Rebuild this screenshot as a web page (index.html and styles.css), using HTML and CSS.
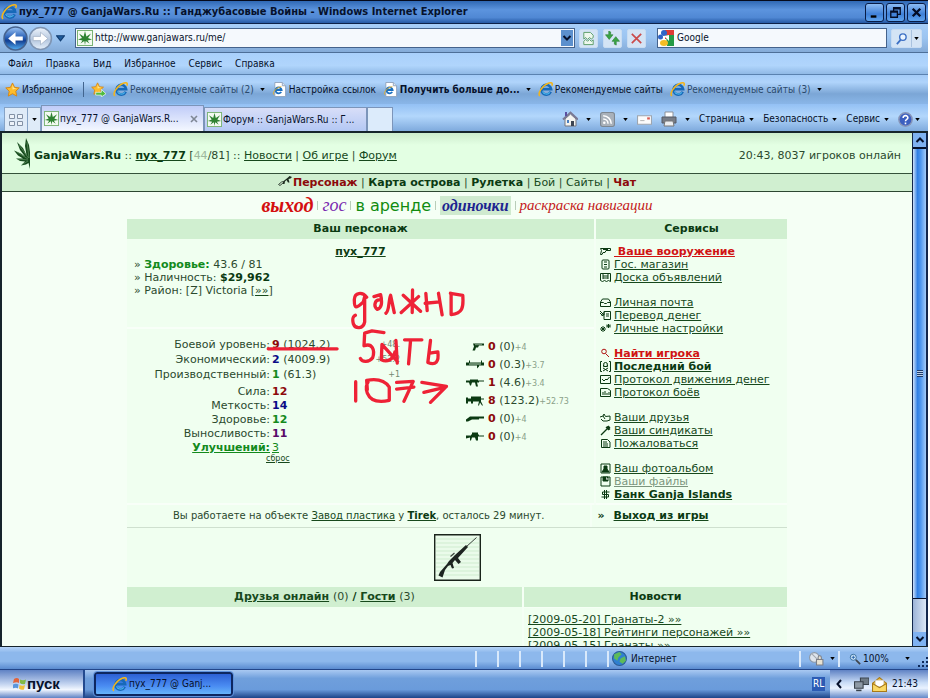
FILE: index.html
```html
<!DOCTYPE html>
<html lang="ru">
<head>
<meta charset="utf-8">
<title>пух_777 @ GanjaWars.Ru :: Ганджубасовые Войны</title>
<link rel="stylesheet" href="styles.css">
</head>
<body>
<svg class="defs" aria-hidden="true">
  <defs>
    <linearGradient id="blueBall" x1="0" y1="0" x2="0" y2="1"><stop offset="0" stop-color="#9cc4f4"/><stop offset=".45" stop-color="#2b62b8"/><stop offset=".6" stop-color="#123f92"/><stop offset="1" stop-color="#55b0f4"/></linearGradient>
    <linearGradient id="greyBall" x1="0" y1="0" x2="0" y2="1"><stop offset="0" stop-color="#eef4fc"/><stop offset=".55" stop-color="#b4c6de"/><stop offset="1" stop-color="#e6f0fb"/></linearGradient>
    <symbol id="ie" viewBox="0 0 16 16">
      <path d="M13.6 10.4A5.2 5.2 0 1 1 14 7.6H5.2" fill="none" stroke="#1769b8" stroke-width="2.8"/>
      <path d="M12.6 11A4.6 4.6 0 0 1 4.6 10" fill="none" stroke="#49b4ea" stroke-width="1.2"/>
      <path d="M2 15C-1 12 5 3.400 11 1.300C15-.2 16 1.600 14.600 4" fill="none" stroke="#f2b51d" stroke-width="1.600"/>
    </symbol>
    <symbol id="iepage" viewBox="0 0 16 16"><path d="M3 .5h8l3.500 3.500v11.500H3z" fill="#fff" stroke="#8fa3bd"/><path d="M11 .5V4h3.500" fill="#dde7f3" stroke="#8fa3bd"/><path d="M9.800 10.500A3.200 3.200 0 1 1 10.200 8.500H4.200" fill="none" stroke="#1a6fc0" stroke-width="2"/><path d="M2 13.500C0 11 5 5.500 10 5" fill="none" stroke="#e9ae22"/></symbol>
    <symbol id="leaf" viewBox="0 0 16 16"><rect x=".5" y=".5" width="15" height="15" fill="#f3faf1" stroke="#7ab374"/><path d="M8 15L7.300 11L3.500 13.500L5.500 10.500L1 9.500L5 8L2 3.500L6.600 6.500L8 1L9.400 6.500L14 3.500L11 8L15 9.500L10.500 10.500L12.500 13.500L8.700 11z" fill="#2f8232"/></symbol>
    <symbol id="star" viewBox="0 0 16 16"><path d="M8 1L10.200 5.700L15.200 6.300L11.500 9.800L12.500 15L8 12.500L3.500 15L4.500 9.800L.8 6.300L5.800 5.700z" fill="#fdbc2c" stroke="#d78512"/><path d="M8 3L9.500 6.500L12.500 7L8 8z" fill="#ffe694"/></symbol>
    <symbol id="arrow" viewBox="0 0 6 4"><path d="M0 0h6L3 4z"/></symbol>
  </defs>
</svg>

<header class="titlebar">
  <svg class="i16"><use href="#ie"/></svg>
  <h1>пух_777 @ GanjaWars.Ru :: Ганджубасовые Войны - Windows Internet Explorer</h1>
  <button class="win" aria-label="Свернуть"><svg viewBox="0 0 18 18"><path d="M5 12h6v2.500H5z"/></svg></button>
  <button class="win" aria-label="Восстановить"><svg viewBox="0 0 18 18"><path d="M7 7V4h7v7h-3M7 5h7M4 7.500h7V14H4zM4 8.500h7" fill="none" stroke="#040d26" stroke-width="1.400"/></svg></button>
  <button class="win" aria-label="Закрыть"><svg viewBox="0 0 18 18"><path d="M5 5l8 8M13 5l-8 8" stroke="#040d26" stroke-width="2.500"/></svg></button>
</header>

<div class="navbar">
  <button class="plain" aria-label="Назад"><svg class="ball" viewBox="0 0 24 24"><circle cx="12" cy="12" r="11" fill="url(#blueBall)" stroke="#47648f" stroke-width="1.500"/><path d="M5 12l7-6v4h7v4h-7v4z" fill="#fff"/></svg></button>
  <button class="plain" aria-label="Вперед"><svg class="ball" viewBox="0 0 24 24"><circle cx="12" cy="12" r="10.500" fill="url(#greyBall)" stroke="#7f95b3" stroke-width="1.500"/><path d="M19 12l-7-6v4H5v4h7v4z" fill="#fff" stroke="#a2b1c5" stroke-width=".7"/></svg></button>
  <button class="plain history" aria-label="Журнал"><svg viewBox="0 0 8 6"><path d="M.5.500h7L4 5z" fill="#1f5c9c" stroke="#123e74"/></svg></button>
  <div class="address">
    <svg class="i16"><use href="#leaf"/></svg>
    <input type="text" aria-label="Адрес" value="http://www.ganjawars.ru/me/">
    <button class="drop" aria-label="Показать адреса"><svg viewBox="0 0 12 16"><path d="M2.500 6L6 9.500L9.500 6" fill="none" stroke="#06112b" stroke-width="2"/></svg></button>
  </div>
  <button class="tool" aria-label="Режим совместимости"><svg viewBox="0 0 16 16"><path d="M3 1.500h7l3 3V7l-2 1.500L9 7 7 9 5 7 3 8.500z" fill="#eef8ee" stroke="#5a9c66"/><path d="M3 14.500V11l2-2 2 2 2-2 2 2 2-1.500v5z" fill="#eef8ee" stroke="#5a9c66"/></svg></button>
  <button class="tool" aria-label="Обновить"><svg viewBox="0 0 16 16"><path d="M4 0v4H.5L4.500 9 8.500 4H6V1zM12 15v-4h3.500L11.500 6 7.500 11H10v3z" fill="#3aa544" stroke="#237a2c" stroke-width=".6"/></svg></button>
  <button class="tool" aria-label="Остановить"><svg viewBox="0 0 16 16"><path d="M3 3l10 10M13 3L3 13" stroke="#cb4b4b" stroke-width="1.800"/></svg></button>
  <div class="search">
    <svg class="i16" viewBox="0 0 16 16"><path d="M0 0h16v16H0z" fill="#fff"/><path d="M7 0h9v9H7z" fill="#df3a34"/><path d="M8 5h8v11H9z" fill="#249a45"/><circle cx="6" cy="3" r="3" fill="#2f65c8"/><circle cx="2.500" cy="7" r="2.500" fill="#2f65c8"/><path d="M6 6l5-1v6z" fill="#fff"/><ellipse cx="6" cy="13" rx="4" ry="3" fill="#f4bd25"/></svg>
    <input type="text" aria-label="Поиск" value="Google">
  </div>
  <div class="go">
    <button aria-label="Найти"><svg viewBox="0 0 14 14"><circle cx="8.500" cy="5.500" r="3.500" fill="#eaf4ff" stroke="#3b6fc4" stroke-width="1.500"/><path d="M6 8.500L2 13" stroke="#3b6fc4" stroke-width="2"/></svg></button>
    <button class="more" aria-label="Параметры поиска"><svg class="tri"><use href="#arrow"/></svg></button>
  </div>
</div>

<nav class="menubar" aria-label="Меню">
  <button>Файл</button><button>Правка</button><button>Вид</button><button>Избранное</button><button>Сервис</button><button>Справка</button>
</nav>

<div class="favbar">
  <button class="first"><svg class="i14"><use href="#star"/></svg>Избранное</button>
  <button class="add" aria-label="Добавить"><svg class="i14" viewBox="0 0 16 16"><use href="#star" width="14" height="14"/><path d="M5 11h6V8l5 4.500-5 3.500v-2H5z" fill="#4fbb3e" stroke="#fff" stroke-width=".7"/></svg></button>
  <button class="dim"><svg class="i14"><use href="#ie"/></svg>Рекомендуемые сайты (2)<svg class="tri"><use href="#arrow"/></svg></button>
  <button><svg class="i14"><use href="#iepage"/></svg>Настройка ссылок</button>
  <button class="strong"><svg class="i14"><use href="#iepage"/></svg>Получить больше до...<svg class="tri"><use href="#arrow"/></svg></button>
  <button><svg class="i14"><use href="#ie"/></svg>Рекомендуемые сайты</button>
  <button class="dim"><svg class="i14"><use href="#ie"/></svg>Рекомендуемые сайты (3)<svg class="tri"><use href="#arrow"/></svg></button>
</div>

<div class="tabbar">
  <button class="quick" aria-label="Быстрые вкладки"><svg viewBox="0 0 14 12"><path d="M.5.500h5v4h-5zM8.500.500h5v4h-5zM.5 7.500h5v4h-5zM8.500 7.500h5v4h-5z" fill="#eef3fa" stroke="#8291a5"/></svg></button>
  <button class="quick small" aria-label="Список вкладок"><svg class="tri"><use href="#arrow"/></svg></button>
  <button class="tab active"><svg class="i14"><use href="#leaf"/></svg><span>пух_777 @ GanjaWars.R...</span><svg class="x" viewBox="0 0 8 8"><path d="M1 1l6 6M7 1L1 7" stroke="#7f8794" stroke-width="1.600"/></svg></button>
  <button class="tab"><svg class="i14"><use href="#leaf"/></svg><span>Форум :: GanjaWars.Ru :: Г...</span></button>
  <button class="tab new" aria-label="Новая вкладка"></button>
  <div class="commands">
    <button aria-label="Домой"><svg class="i16" viewBox="0 0 16 16"><path d="M3 8v7h11V8L8.500 3z" fill="#f4f4f0" stroke="#76767e"/><path d="M1 8.500L8.500 1.500L16 8.500" fill="none" stroke="#7a7994" stroke-width="2"/><path d="M3 1h2v4H3z" fill="#5b4fa0"/><path d="M9 10h3v5H9z" fill="#3d4552"/><path d="M5 9h2v3H5z" fill="#4a7fc0"/></svg><svg class="tri"><use href="#arrow"/></svg></button>
    <button aria-label="Каналы"><svg class="i14" viewBox="0 0 14 14"><rect x=".5" y=".5" width="13" height="13" rx="2" fill="#a9b1ba" stroke="#7d8791"/><path d="M3 6.500a4.500 4.500 0 0 1 4.500 4.500M3 3.500a7.500 7.500 0 0 1 7.500 7.500" fill="none" stroke="#fff" stroke-width="1.400"/><circle cx="4" cy="10" r="1.200" fill="#fff"/></svg><svg class="tri"><use href="#arrow"/></svg></button>
    <button aria-label="Почта"><svg class="i14" viewBox="0 0 14 14"><path d="M.5 3.500h13v8H.5z" fill="#fbfbfb" stroke="#9da5af"/><path d="M9.500 5h2.500v2H9.500z" fill="#d85a52"/><path d="M3 8h4" stroke="#bbb"/></svg></button>
    <button aria-label="Печать"><svg class="i16" viewBox="0 0 16 16"><path d="M4 1h8v6H4z" fill="#fff" stroke="#8c9199"/><path d="M1 6h14v6H1z" fill="#777d87" stroke="#555b66"/><path d="M4 10h8l1 5H3z" fill="#eceff2" stroke="#777"/></svg><svg class="tri"><use href="#arrow"/></svg></button>
    <button>Страница<svg class="tri"><use href="#arrow"/></svg></button>
    <button>Безопасность<svg class="tri"><use href="#arrow"/></svg></button>
    <button>Сервис<svg class="tri"><use href="#arrow"/></svg></button>
    <button class="help" aria-label="Справка"><svg class="i14" viewBox="0 0 14 14"><circle cx="7" cy="7" r="6.200" fill="#3c5fc0" stroke="#8694b8" stroke-width="1.400"/><path d="M4.800 5.500c0-3 4.600-2.600 4.400 0C9.100 7 7 6.800 7 8.600M7 9.800v1.600" fill="none" stroke="#fff" stroke-width="1.500"/></svg><svg class="tri"><use href="#arrow"/></svg></button>
  </div>
</div>

<div class="viewport">
  <main class="page">
    <div class="site-head">
      <svg class="logo" viewBox="0 0 17 31"><path d="M16 31L14.500 25L12 26.500L7 27.500L11 23.500L6 23L2 20.500L9 20.500L4 17.500L0 12.500L7 15.500L11 18.500L6 12L3 4L9 10L12.500 17L11 8L12 0L15 7L16 14z" fill="#174b1d"/><path d="M14 23L8 26.500M14 22L4 21M14 21L3 14M14.500 20L5 7M15 20L13 4" stroke="#7fb07f" stroke-width=".5"/></svg>
      <p><b>GanjaWars.Ru</b> :: <a href="#"><b>пух_777</b></a> [<span class="faint">44</span>/81] :: <a href="#">Новости</a> | <a href="#">Об игре</a> | <a href="#">Форум</a></p>
      <p class="online">20:43, 8037 игроков онлайн</p>
    </div>
    <nav class="site-nav">
      <svg viewBox="0 0 14 10"><path d="M4.500 5.500L9.500 1.500L11 0L13.500 1L12 2.500L10 3L11 6.500L9.500 6.500L8 4L6.500 5.500L6 8L4.500 8z" fill="#1c2b1e"/><path d="M0 8.500L3 6L5 5.500M0 8.500L1.500 9.500L4.500 7" fill="none" stroke="#3b4a3d"/></svg><a href="#" class="red"><b>Персонаж</b></a> | <a href="#"><b>Карта острова</b></a> | <a href="#"><b>Рулетка</b></a> | <a href="#">Бой</a> | <a href="#">Сайты</a> | <a href="#" class="red"><b>Чат</b></a>
    </nav>
    <nav class="quicklinks">
      <a href="#" class="q-exit">выход</a><i></i><a href="#" class="q-gos">гос</a><i></i><a href="#" class="q-rent">в аренде</a><i></i><a href="#" class="q-single">одиночки</a><i></i><a href="#" class="q-paint">раскраска навигации</a>
    </nav>

    <div class="board">
      <div class="row upper">
        <section class="character">
          <h2>Ваш персонаж</h2>
          <div class="cell summary">
            <a href="#" class="nick"><b>пух_777</b></a>
            <p>» <b class="green">Здоровье:</b> 43.6 / 81</p>
            <p>» Наличность: <b class="dark">$29,962</b></p>
            <p>» Район: [Z] Victoria [<a href="#">»»</a>]</p>
          </div>
          <div class="cell stats">
            <table class="levels">
              <tbody>
                <tr><th>Боевой уровень:</th><td><b class="red">9</b> (1024.2)</td><td class="plus">+48.</td></tr>
                <tr><th>Экономический:</th><td><b class="navy">2</b> (4009.9)</td><td class="plus">+52.2</td></tr>
                <tr><th>Производственный:</th><td><b class="green">1</b> (61.3)</td><td class="plus">+1</td></tr>
              </tbody>
              <tbody class="skills">
                <tr><th>Сила:</th><td><b class="red">12</b></td></tr>
                <tr><th>Меткость:</th><td><b class="navy">14</b></td></tr>
                <tr><th>Здоровье:</th><td><b class="green">12</b></td></tr>
                <tr><th>Выносливость:</th><td><b class="purple">11</b></td></tr>
                <tr class="upg"><th><a href="#">Улучшений:</a></th><td><a href="#">3</a></td></tr>
                <tr class="reset"><th></th><td><a href="#">сброс</a></td></tr>
              </tbody>
            </table>
            <table class="weapons">
              <tr><th><svg viewBox="0 0 18 9"><path d="M7 1h11v2h-5l-1 2h-2L9 8H6.500L8 4z"/><path d="M9 2.200h7" stroke="#effff0" stroke-width=".5"/></svg></th><td><b class="red">0</b> (0)<small>+4</small></td></tr>
              <tr><th><svg viewBox="0 0 18 9"><path d="M0 2h18v3h-5v1l-2 2v-3H0zM3 0h1v2H3zM15 0h1v2h-1z"/><path d="M3 3.500h12" stroke="#effff0" stroke-width=".8"/></svg></th><td><b class="red">0</b> (0.3)<small>+3.7</small></td></tr>
              <tr><th><svg viewBox="0 0 18 9"><path d="M0 2h4V1h8v1h6v1h-5v1h-2l1 4h-2L9 4H6L5 7H4L3 4H0z"/></svg></th><td><b class="red">1</b> (4.6)<small>+3.4</small></td></tr>
              <tr><th><svg viewBox="0 0 18 9"><path d="M0 1h2v1h3V0h10v2h3v1h-3v2l2 4h-1l-2-3-1 3h-1l1-4H7v2H5V5H2v2H0z"/></svg></th><td><b class="red">8</b> (123.2)<small>+52.73</small></td></tr>
              <tr><th><svg viewBox="0 0 18 9"><path d="M0 5l4-3h14v2h-5v1H6L2 7H0z"/></svg></th><td><b class="red">0</b> (0)<small>+4</small></td></tr>
              <tr><th><svg viewBox="0 0 18 9"><path d="M0 3h5V2h1V0h6v2h1v1h5v1h-6v4h-2L9 5H6L5 8H4V5L0 6z"/></svg></th><td><b class="red">0</b> (0)<small>+4</small></td></tr>
            </table>
          </div>
        </section>
        <section class="services">
          <h2>Сервисы</h2>
          <div class="cell menu">
            <ul>
              <li class="hot"><svg viewBox="0 0 11 11"><path d="M.5 2.500h10v2H6L5 6.500H3L2 8.500H.5l1-4zM3 3.500h5"/></svg><a href="#">&nbsp;Ваше вооружение</a></li>
              <li><svg viewBox="0 0 11 11"><rect x="2" y="1" width="7" height="9" rx="1"/><path d="M4 3h3M4 5.500h3M4 8h3"/></svg><a href="#">Гос. магазин</a></li>
              <li><svg viewBox="0 0 11 11"><path d="M.5 1.500h10v8l-2-1-2 1-2-1-2 1-2-1zM3 4h5M3 6h5M3 2v5M8 2v5"/></svg><a href="#">Доска объявлений</a></li>
            </ul>
            <ul>
              <li><svg viewBox="0 0 11 11"><path d="M.5 5L2.500 2h6l2 3v4.500H.5zM.5 5.500h3l1 1h2l1-1h3"/></svg><a href="#">Личная почта</a></li>
              <li><svg viewBox="0 0 11 11"><path d="M4 1.500h6.500v8H4zM6 4h3M6 6h3M0 1l4 4M4 2v3H1M0 3l3 3"/></svg><a href="#">Перевод денег</a></li>
              <li><svg viewBox="0 0 11 11"><path d="M0 6h6M3 3v6M1 4l4 4M5 4L1 8M6 3h5M8.500 1v4M7 1.500l3 3M10 1.500l-3 3"/></svg><a href="#">Личные настройки</a></li>
            </ul>
            <ul>
              <li class="hot"><svg viewBox="0 0 11 11"><circle cx="4" cy="3.500" r="2.300"/><path d="M5.500 5.500L9 9"/></svg><a href="#">Найти игрока</a></li>
              <li><svg viewBox="0 0 11 11"><path d="M2 .5H.5v10H2M9 .5h1.500v10H9M3.500 3.500a2 2 0 0 1 4 0v2h-4zM3 7l5 3M8 7l-5 3M4.500 4h.5M6.500 4h.5"/></svg><a href="#"><b>Последний бой</b></a></li>
              <li><svg viewBox="0 0 11 11"><path d="M.5 1.500h10v8H.5zM2 5l2 2 2-2 1 1 2.500-3"/></svg><a href="#">Протокол движения денег</a></li>
              <li><svg viewBox="0 0 11 11"><path d="M.5 1.500h7l3 2v6H.5zM3 8V5M5 8V4M7 8V6M9 8V5"/></svg><a href="#">Протокол боёв</a></li>
            </ul>
            <ul>
              <li><svg viewBox="0 0 11 11"><path d="M0 5l3-1 1-2 1.500 2.500L10 4v4L7 9H3L1 7M3 4l2 3"/></svg><a href="#">Ваши друзья</a></li>
              <li><svg viewBox="0 0 11 11"><path d="M1 10l8-8M6 2l3 3M7 1.500l3 3M8 1l2 2" stroke-width="1.300"/></svg><a href="#">Ваши синдикаты</a></li>
              <li><svg viewBox="0 0 11 11"><path d="M1.500 1.500h6l2.500 2.500v5.500H1.500zM3 4h4M3 6h5M3 8h5"/></svg><a href="#">Пожаловаться</a></li>
            </ul>
            <ul>
              <li><svg viewBox="0 0 11 11"><path d="M1 1h9v9H1z"/><path d="M4 3h3v3l2 3H2l2-3z" fill="#0b3a12"/></svg><a href="#">Ваш фотоальбом</a></li>
              <li class="off"><svg viewBox="0 0 11 11"><path d="M1 1h9v9H1z"/><path d="M3 1h5v4H3z" fill="#0b3a12"/><path d="M6 2h1v2" stroke="#fff"/></svg><a href="#">Ваши файлы</a></li>
              <li><svg viewBox="0 0 11 11"><path d="M9.500 3H2.500v2.500h6V8H1.500M4.500 1v9M6.500 1v9"/></svg><a href="#"><b>Банк Ganja Islands</b></a></li>
            </ul>
          </div>
        </section>
      </div>
      <div class="row work">
        <p class="cell job">Вы работаете на объекте <a href="#">Завод пластика</a> у <a href="#"><b>Tirek</b></a>, осталось 29 минут.</p>
        <p class="cell leave"><b>»</b><a href="#"><b>Выход из игры</b></a></p>
      </div>
      <div class="cell showcase">
        <svg viewBox="0 0 47 47"><path d="M.7.7h45.600v45.600H.7z" fill="#eafbea" stroke="#1a241b" stroke-width="1.400"/><path d="M2 5h43M2 9h43M2 13h43M2 17h43M2 21h43M2 25h43M2 29h43M2 33h43M2 37h43M2 41h43" stroke="#cfeccf"/><path d="M42.500 3.500L32 13" stroke="#39413b"/><path d="M32 11L34 13L24 24L27 28L24.500 30L21 26L18.500 29L20 34L18 34.500L16.500 31L14 32L11 36L8.500 43.500L4.500 41.500L6 38L13 30L15 27L21 21z" fill="#1d2420"/><path d="M16.500 22.500l4-3.500" stroke="#39413b" stroke-width="1.200"/></svg>
      </div>
      <div class="row lower">
        <section class="friends"><h2><a href="#">Друзья онлайн</a> <span>(0)</span> / <a href="#">Гости</a> <span>(3)</span></h2><div class="cell"></div></section>
        <section class="news"><h2>Новости</h2>
          <div class="cell">
            <a href="#">[2009-05-20] Гранаты-2 »»</a>
            <a href="#">[2009-05-18] Рейтинги персонажей »»</a>
            <a href="#">[2009-05-15] Гранаты »»</a>
          </div>
        </section>
      </div>
      <svg class="scribble" viewBox="-225 0 600 400" role="img" aria-label="должно быть 1077">
        <path d="M80 52C66 34 44 38 43 58C42 88 48 86 70 66L74 50V126C70 148 46 148 40 132C36 116 38 110 46 106M102 50L122 44C128 70 124 86 112 88C100 80 104 60 118 60M138 100C148 94 146 60 152 46L163 98M218 30L217 98M190 46L242 94M236 50L184 98M258 40L262 92M256 70L300 66M296 40L307 105M334 40V104C368 100 372 84 369 46L332 40"/>
        <path d="M132 158L96 153L74 160L72 198C96 188 106 210 98 234C88 248 66 248 61 236M126 194L124 240C142 248 160 240 165 216M168 182L172 250M128 196L168 240M194 180H246M212 182L206 252M272 182L264 248C288 258 298 246 294 216L270 220"/>
        <path d="M47 306V364M82 330L80 302C112 296 136 304 148 322V362C112 370 90 360 82 340C76 326 80 312 84 308M170 308L220 305L192 365M170 328L222 322M246 308L320 320L272 368M252 338L318 322M-216 207H-9"/>
      </svg>
    </div>
  </main>
  <div class="scrollbar">
    <button aria-label="Вверх"><svg viewBox="0 0 12 12"><path d="M2.500 8L6 4.500L9.500 8" fill="none" stroke="#06112b" stroke-width="2"/></svg></button>
    <div class="thumb"><span></span></div>
    <div class="track"></div>
    <button aria-label="Вниз"><svg viewBox="0 0 12 12"><path d="M2.500 4L6 7.500L9.500 4" fill="none" stroke="#06112b" stroke-width="2"/></svg></button>
  </div>
</div>

<footer class="statusbar">
  <span class="pane"></span><span class="pane"></span><span class="pane"></span><span class="pane"></span><span class="pane"></span><span class="pane"></span>
  <span class="pane zone"><svg class="i14" viewBox="0 0 14 14"><circle cx="7" cy="7" r="6.500" fill="#2f7fd0" stroke="#2d5c93"/><path d="M2 3l5-2 2 2-3 3-1 3-3-2zM8 7l4-2 1 4-3 3-3-2z" fill="#5ebb58"/></svg>Интернет</span>
  <span class="pane lock"><svg class="i14" viewBox="0 0 14 14"><circle cx="5" cy="6" r="4.500" fill="#dfe5ec" stroke="#8c99a8"/><path d="M2 2l8 8" stroke="#a3a9b0"/><path d="M7 8h6v5H7zM8.500 8V6a1.500 1.500 0 0 1 3 0v2" fill="#e7e2d2" stroke="#7c7f87"/></svg><svg class="tri"><use href="#arrow"/></svg></span>
  <span class="pane zoom"><svg class="i12" viewBox="0 0 14 14"><circle cx="5" cy="5" r="3.500" fill="#d7ecff" stroke="#28608f"/><path d="M8 8l5 5" stroke="#40454c" stroke-width="2"/><path d="M3 5h4M5 3v4" stroke="#1d5aa0"/></svg>100%<svg class="tri"><use href="#arrow"/></svg><svg class="grip" viewBox="0 0 10 10"><path d="M8 0h2v2H8zM4 4h2v2H4zM8 4h2v2H8zM0 8h2v2H0zM4 8h2v2H4zM8 8h2v2H8z" fill="#0e2a5a"/></svg></span>
</footer>

<footer class="taskbar">
  <button class="start"><svg viewBox="0 0 14 14"><path d="M1 2q3-2 5 0v4Q4 4.500 0 6z" fill="#e2633a"/><path d="M7 2.500q3 1.500 6 0l-1 4.500q-3 1-5-1z" fill="#82b845"/><path d="M0 7.500q3-1.500 5.500 0l-.5 4q-2-1.500-5.500 0z" fill="#5a96dd"/><path d="M6.500 8q3 1.500 5.500 0l-1 4.500q-3 1-5-1z" fill="#f1bf39"/></svg>пуск</button>
  <button class="task"><svg class="i14"><use href="#ie"/></svg>пух_777 @ Ganj...</button>
  <span class="lang">RL</span>
  <div class="tray">
    <svg class="chev" viewBox="0 0 6 10"><path d="M5 1L1.500 5L5 9" fill="none" stroke="#06112b" stroke-width="2"/></svg>
    <svg class="i14" viewBox="0 0 14 14"><path d="M6 1h8v6H6z" fill="#6e7a85" stroke="#38424c"/><path d="M.5 4.500h8v6h-8z" fill="#8d99a5" stroke="#38424c"/><path d="M2 12.500h5" stroke="#38424c" stroke-width="1.500"/></svg>
    <svg class="i14" viewBox="0 0 14 14"><path d="M.5 6L7 .5 13.500 6v7.500H.5z" fill="#f3c33f" stroke="#a87a18"/><path d="M3 3h8v6H3z" fill="#fff" stroke="#b9b9b9" stroke-width=".5"/><path d="M.5 6L7 10l6.500-4v7.500H.5z" fill="#fad965" stroke="#a87a18"/></svg>
    <time>21:43</time>
  </div>
</footer>
</body>
</html>
```
FILE: styles.css
```css
* { box-sizing: border-box; }
body {
  margin: 0;
  height: 100vh;
  padding-right: 2px;
  display: flex;
  flex-direction: column;
  overflow: hidden;
  background: #fff;
  color: #06112b;
  font: 10px/14px "DejaVu Sans Condensed", "DejaVu Sans", sans-serif;
}
body > * { flex: none; }
button, input { font: inherit; color: inherit; margin: 0; }
button { border: 0; padding: 0; background: none; display: flex; align-items: center; white-space: nowrap; }
svg { flex: none; }
h1, h2, p, ul { margin: 0; padding: 0; font-weight: normal; }
.defs { position: absolute; width: 0; height: 0; }
.i16 { width: 16px; height: 16px; }
.i14 { width: 15px; height: 15px; }
.i12 { width: 12px; height: 12px; }
.tri { width: 5px; height: 3px; }

.titlebar {
  display: flex;
  align-items: center;
  gap: 2px;
  height: 24px;
  padding: 0 2px 0 1px;
  background: linear-gradient(#2f68b4, #5c94de 40%, #5088d4 75%, #2458a4);
  border-top: 1px solid #050a1c;
  border-bottom: 1px solid #0c2148;
}
.titlebar h1 { flex: 1; font: bold 11px/16px "DejaVu Sans Condensed", sans-serif; }
.win {
  width: 19px;
  height: 19px;
  border: 1px solid #081c46;
  border-radius: 3px;
  background: linear-gradient(#8cbcf4, #3f80d8 60%, #5fa4ee);
}
.win svg { width: 17px; height: 17px; }

.navbar {
  display: flex;
  align-items: center;
  height: 29px;
  padding: 0 6px 0 3px;
  background: linear-gradient(#a6cdf8, #9cc4f0 50%, #84abd8);
  border-bottom: 1px solid #4d6f98;
}
.ball { width: 25px; height: 25px; }
.history { padding: 0 10px 0 3px; }
.history svg { width: 9px; height: 7px; }
.address, .search {
  display: flex;
  align-items: center;
  height: 20px;
  gap: 3px;
  padding: 1px 1px 1px 2px;
  border: 1px solid #45638c;
  background: #f5f9fd;
}
.address { flex: 505; margin-right: 4px; padding-left: 1px; gap: 2px; }
.search { flex: 231; margin: 0 4px 0 6px; padding-left: 0; }
.address input, .search input { flex: 1; min-width: 0; border: 0; padding: 0; background: none; outline: 0; }
.drop { width: 12px; height: 16px; background: #5c90cd; }
.drop svg { width: 12px; height: 16px; }
.tool, .go { height: 19px; border: 1px solid #c8dcf2; border-radius: 2px; background: #d4e4f5; }
.tool { width: 19px; justify-content: center; margin-right: 5px; }
.tool svg { width: 15px; height: 15px; }
.go { display: flex; width: 31px; }
.go button { flex: 2; justify-content: center; }
.go .more { flex: 1; border-left: 1px solid #a9c2df; }
.go button svg:not(.tri) { width: 13px; height: 13px; }

.menubar {
  display: flex;
  gap: 13px;
  height: 22px;
  padding-left: 8px;
  background: linear-gradient(#a9d0fb, #b0d5fc 60%, #90b9e6);
  border-bottom: 1px solid #5a82b0;
}

.favbar {
  display: flex;
  align-items: center;
  height: 29px;
  gap: 7px;
  padding-left: 5px;
  background: linear-gradient(#a3cbf8, #b0d4fb 25%, #7ba6d6 65%, #8ab6e8);
}
.favbar button { gap: 2px; }
.favbar .tri { margin-left: 4px; }
.favbar .first { padding-right: 10px; border-right: 1px solid #42658f; }
.dim { color: #2b4a6c; }
.strong { font-weight: bold; }

.tabbar {
  display: flex;
  align-items: flex-end;
  height: 27px;
  padding: 1px 8px 0 4px;
  background: linear-gradient(#93c0f4, #b3d7fc 45%, #7faadd);
}
.tabbar button { height: 24px; }
.quick { width: 24px; justify-content: center; border: 1px solid #86a3c6; border-bottom: 0; background: #dfebf8; }
.quick svg:not(.tri) { width: 14px; height: 12px; }
.quick.small { width: 13px; border-left: 0; }
.tab { width: 163px; padding: 0 5px 0 2px; gap: 1px; border: 1px solid #7c95ba; border-bottom: 0; background: linear-gradient(#d8def8, #b4c8f4); }
.tab span { flex: 1; text-align: left; }
.tab.active { background: linear-gradient(#c0ccf8, #f4f8ff); }
.tabbar .tab.active { height: 26px; }
.tab .x { width: 8px; height: 8px; }
.tab.new { width: 26px; background: #dcebfb; }
.commands { margin-left: auto; display: flex; gap: 9px; }
.commands button { gap: 4px; }
.commands [aria-label] { gap: 8px; }
.commands .help { gap: 2px; }

.viewport { flex: 1 1 0; min-height: 0; display: flex; border: 2px solid #16242c; border-width: 2px 0 1px 2px; }
.page {
  flex: 1;
  min-width: 0;
  overflow: hidden;
  background: #f5fff5;
  color: #2b4a2e;
  font: 11px/13px "DejaVu Sans", sans-serif;
}
.page a { color: #17491c; }
.page b, .page h2 { color: #0b3a12; }
.page .red, .page .red b { color: #8c0a0a; }
.page .green { color: #138a1c; }
.page .navy { color: #0b0b86; }
.page .purple { color: #590a68; }
.page .faint { color: #9db79d; }

.site-head {
  display: flex;
  align-items: center;
  gap: 3px;
  height: 41px;
  padding: 0 11px 0 12px;
  background: linear-gradient(#cdeccd, #e3ffe3 30%, #e3ffe3);
  border-bottom: 1px solid #35513a;
}
.site-head p { padding-top: 4px; }
.site-head .online { margin-left: auto; }
.logo { width: 17px; height: 31px; }
.site-nav { height: 18px; text-align: center; line-height: 17px; background: #d0efd0; border-bottom: 1px solid #2c4731; }
.site-nav a { text-decoration: none; }
.site-nav svg { width: 15px; height: 10px; }
.quicklinks { display: flex; justify-content: center; align-items: center; gap: 4px; height: 27px; padding: 2px 0; font-family: "Liberation Serif", serif; font-style: italic; }
.quicklinks a { text-decoration: none; line-height: 19px; }
.quicklinks i { width: 1px; height: 9px; background: #b9cdb9; }
.quicklinks .q-exit { color: #d40f0f; font-size: 20px; font-weight: bold; }
.quicklinks .q-gos { color: #7a2bb0; font-size: 18px; }
.quicklinks .q-rent { color: #108c10; font: 16px/19px "DejaVu Sans", sans-serif; }
.quicklinks .q-single { color: #1c2490; font-size: 16px; font-weight: bold; background: #cfeacf; padding: 0 2px; }
.quicklinks .q-paint { color: #c41a1a; font-size: 15px; }

.board { position: relative; width: 660px; max-width: 100%; margin: 0 auto; }
.row { display: flex; gap: 2px; }
.board h2 { height: 20px; font: bold 11px/20px "DejaVu Sans", sans-serif; text-align: center; background: #d0efd0; }
.board h2 span { font-weight: normal; color: #2b4a2e; }
.cell { background: #f0fff0; }
.character, .job { flex: 467; display: flex; flex-direction: column; min-width: 0; }
.services, .leave { flex: 191; min-width: 0; }
.row .character, .row .services { border-bottom: 2px solid #f8fff8; }
.summary { height: 90px; padding: 6px 7px; border-bottom: 2px solid #f8fff8; }
.nick { display: block; text-align: center; }
.stats { flex: 1; display: flex; padding-top: 8px; }
.stats table { border-collapse: collapse; align-self: flex-start; }
.stats th, .stats td { padding: 0 1px; text-align: left; font-weight: normal; white-space: nowrap; }
.levels { line-height: 15px; width: 274px; }
.stats .levels th { width: 144px; text-align: right; }
.stats .levels .plus { text-align: right; font-size: 8px; color: #708a70; }
.skills { line-height: 14px; }
.skills tr:first-child > * { padding-top: 3px; }
.upg a { color: #138a1c; }
.upg th a { font-weight: bold; }
.reset a { display: block; margin-left: -6px; font-size: 8px; line-height: 8px; }
.stats .weapons { margin: 1px 0 0 64px; line-height: 18px; }
.weapons th svg { display: block; width: 18px; height: 10px; fill: #0b3a12; }
.weapons small { font-size: 8px; line-height: 8px; color: #8aa18a; }
.weapons tr { height: 18px; }
.stats .weapons td { padding: 0 0 0 3px; line-height: 16px; }

.menu { padding: 6px 4px 2px; display: flex; flex-direction: column; gap: 12px; }
.menu ul { list-style: none; }
.menu li { display: flex; align-items: center; gap: 3px; height: 13px; white-space: nowrap; }
.menu svg { width: 11px; height: 11px; fill: none; stroke: #0b3a12; }
.menu .hot a { color: #d01414; font-weight: bold; }
.menu ul:nth-child(3) .hot svg { stroke: #b01515; }
.menu .off a { color: #7c957e; }

.work { border-bottom: 1px solid #cfe0cf; }
.work p { line-height: 22px; }
.job { display: block; text-align: center; font-size: 10px; }
.leave { display: flex; gap: 9px; padding-left: 5px; }
.showcase { height: 59px; padding-top: 6px; text-align: center; }
.showcase svg { width: 47px; height: 47px; }
.friends { flex: 395; display: flex; flex-direction: column; }
.friends .cell { flex: 1; }
.news { flex: 263; }
.news .cell { padding: 5px 4px; margin-top: 1px; }
.news .cell a { display: block; }
.scribble { position: absolute; left: 138px; top: 61px; width: 200px; height: 133px; fill: none; stroke: #ee2236; stroke-width: 10; stroke-linecap: round; stroke-linejoin: round; pointer-events: none; }

.scrollbar { display: flex; flex-direction: column; width: 16px; border-left: 1px solid #12264c; border-right: 2px solid #12264c; background: #c3d6f0; }
.scrollbar button { height: 14px; justify-content: center; background: #7fb2f2; }
.scrollbar button svg { width: 12px; height: 12px; }
.thumb { flex: 450; display: flex; align-items: center; justify-content: center; border: 1px solid #06112b; border-width: 2px 0 1px; background: linear-gradient(90deg, #cfe2fb, #2f7fe4 35%, #4f97ee 60%, #a3cbf8); }
.thumb span { width: 6px; height: 7px; background: repeating-linear-gradient(#1f3c6c 0 1px, #b9cfe9 1px 2px); }
.track { flex: 33; background: linear-gradient(90deg, #9db4d8, #dbe7f6); }

.statusbar { display: flex; justify-content: flex-end; align-items: center; height: 23px; padding-top: 1px; background: linear-gradient(#b6d4f8, #8db8ec 25%, #8db8ec 65%, #5a8bd0); border-bottom: 1px solid #23468a; }
.pane { display: flex; align-items: center; gap: 4px; height: 16px; border-left: 2px solid #d9e9fb; width: 22px; }
.pane.zone { width: 192px; padding-left: 3px; }
.pane.lock { width: 39px; padding-left: 8px; gap: 6px; }
.pane.zoom { width: 90px; padding-left: 9px; gap: 2px; }
.zoom .tri { margin-left: 14px; }
.grip { width: 10px; height: 10px; margin: 6px 0 0 auto; }

.taskbar { display: flex; align-items: center; height: 28px; background: linear-gradient(#a9c9f2, #6f9fdc 30%, #6a9bdb 70%, #1d4488); }
.start { width: 85px; height: 28px; padding-left: 13px; font: bold 15px/20px "Liberation Sans", sans-serif; background: linear-gradient(#5f82c4, #c3d4f0 50%, #f2f7ff 70%, #5f82c4); border-right: 2px solid #234a8f; }
.start svg { width: 14px; height: 14px; }
.task { width: 139px; height: 24px; margin-left: 9px; padding-left: 16px; gap: 2px; border: 2px solid #0d2760; outline: 1px solid #5f92dc; border-radius: 3px; background: linear-gradient(#2c60d4, #4a8cf2 60%, #66b4fa); }
.lang { margin-left: auto; padding: 0 1px; width: 13px; overflow: hidden; color: #fff; background: #2c5bb4; }
.tray { display: flex; align-items: center; gap: 3px; width: 98px; height: 28px; margin-left: 5px; padding-left: 6px; background: linear-gradient(#5f82c4, #c9dcf6 45%, #eaf3ff 65%, #6488c8); }
.chev { width: 6px; height: 10px; margin-right: 9px; }
.tray time { margin-left: 2px; }
```
